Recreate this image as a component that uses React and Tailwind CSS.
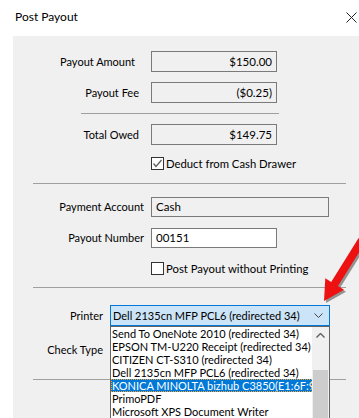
import React from 'react';

const font = { fontFamily: 'Lato, "Noto Sans", sans-serif' };

function Field({ label, pr, value, w, h = 21, align = 'right', white = false, mt }) {
  return (
    <div className={`flex items-center ${mt}`} style={{ height: h }}>
      <div className="w-[138px] text-right" style={{ paddingRight: pr }}>{label}</div>
      <div
        className={`h-full border border-[#7a7a7a] flex items-center px-[4px] text-[11.5px] ${white ? 'bg-white' : 'bg-[#f0f0f0]'} ${align === 'right' ? 'justify-end' : 'justify-start'}`}
        style={{ width: w }}
      >
        {value}
      </div>
    </div>
  );
}

function Check({ label, checked, mt }) {
  return (
    <div className={`flex items-center h-[13px] pl-[138px] ${mt}`}>
      <div className="w-[13px] h-[13px] border border-[#333] bg-white flex items-center justify-center">
        {checked && (
          <svg width="11" height="11" viewBox="0 0 11 11">
            <path d="M1.5 5.5 L4 8.5 L9.5 2" stroke="#606060" strokeWidth="1.3" fill="none" />
          </svg>
        )}
      </div>
      <span className="ml-[2px] text-[11.3px]">{label}</span>
    </div>
  );
}

const printers = [
  'Send To OneNote 2010 (redirected 34)',
  'EPSON TM-U220 Receipt (redirected 34)',
  'CITIZEN CT-S310 (redirected 34)',
  'Dell 2135cn MFP PCL6 (redirected 34)',
  'KONICA MINOLTA bizhub C3850(E1:6F:93)',
  'PrimoPDF',
  'Microsoft XPS Document Writer',
];

export default function App() {
  return (
    <div className="w-[359px] h-[418px] bg-white relative overflow-hidden text-[11px] leading-[14px] text-black" style={font}>
      <div className="h-[36px] flex items-center justify-between pl-[15px] pr-[2px] pb-[2px]">
        <span className="text-[12px]">Post Payout</span>
        <svg width="11" height="11" viewBox="0 0 11 11">
          <path d="M0.5 0.5 L10.5 10.5 M10.5 0.5 L0.5 10.5" stroke="#222" strokeWidth="1" />
        </svg>
      </div>
      <div className="ml-[13px] h-[382px] bg-[#f0f0f0] relative pt-[15px]">
        <Field label="Payout Amount" pr={16} value="$150.00" w={126} />
        <Field label="Payout Fee" pr={12} value="($0.25)" w={126} mt="mt-[10px]" />
        <div className="ml-[68px] w-[198px] h-px bg-[#a0a0a0] mt-[10px]" />
        <Field label="Total Owed" pr={12} value="$149.75" w={126} mt="mt-[10px]" />
        <Check label="Deduct from Cash Drawer" checked mt="mt-[12px]" />
        <div className="ml-[20px] w-[313px] h-px bg-[#a0a0a0] mt-[13px]" />
        <Field label="Payment Account" pr={7} value="Cash" w={178} h={20} align="left" mt="mt-[13px]" />
        <Field label="Payout Number" pr={7} value="00151" w={126} h={20} align="left" white mt="mt-[11px]" />
        <Check label="Post Payout without Printing" mt="mt-[14px]" />
        <div className="ml-[20px] w-[313px] h-px bg-[#a0a0a0] mt-[12px]" />
        <div className="flex items-center h-[21px] mt-[17px]">
          <div className="w-[97px] text-right pr-[7px]">Printer</div>
          <div className="w-[220px] h-full border border-[#0078d7] bg-[#cce4f7] flex items-center justify-between pl-[2px] pr-[6px]">
            <span className="whitespace-nowrap">Dell 2135cn MFP PCL6 (redirected 34)</span>
            <svg width="9" height="5" viewBox="0 0 9 5">
              <path d="M0.5 0.5 L4.5 4.5 L8.5 0.5" stroke="#444" strokeWidth="1" fill="none" />
            </svg>
          </div>
        </div>
        <div className="flex items-center mt-[14px] h-[20px]">
          <div className="w-[97px] text-right pr-[7px]">Check Type</div>
        </div>
        <div className="ml-[20px] w-[313px] h-px bg-[#a0a0a0] mt-[19px]" />

        <div className="absolute left-[97px] top-[290px] w-[220px] h-[94px] bg-white border-l border-r border-t border-[#646464] flex">
          <div className="flex-1 min-w-0 overflow-hidden">
            {printers.map((p, i) => (
              <div
                key={p}
                className={`h-[13px] leading-[13px] pl-[1px] whitespace-nowrap overflow-hidden ${i === 4 ? 'bg-[#0078d7] text-white outline outline-1 outline-dotted outline-[#f0a030] -outline-offset-1' : ''}`}
              >
                {p}
              </div>
            ))}
          </div>
          <div className="w-[17px] shrink-0 bg-[#f0f0f0] flex flex-col items-center">
            <div className="h-[17px] flex items-center justify-center">
              <svg width="9" height="5" viewBox="0 0 9 5">
                <path d="M0.5 4.5 L4.5 0.5 L8.5 4.5" stroke="#606060" strokeWidth="1.4" fill="none" />
              </svg>
            </div>
            <div className="mt-[26px] w-[15px] flex-1 bg-[#cdcdcd]" />
          </div>
        </div>
      </div>

      <svg className="absolute left-0 top-0" width="359" height="418" viewBox="0 0 359 418">
        <polygon
          points="326,303 327.3,280.2 333.2,283.9 360.6,239.9 367.4,244.1 340,288.1 346,291.8"
          fill="#333"
          opacity="0.5"
        />
        <polygon
          points="324,301 325.3,278.2 331.2,281.9 358.6,237.9 365.4,242.1 338,286.1 344,289.8"
          fill="#ee1111"
        />
      </svg>
    </div>
  );
}
